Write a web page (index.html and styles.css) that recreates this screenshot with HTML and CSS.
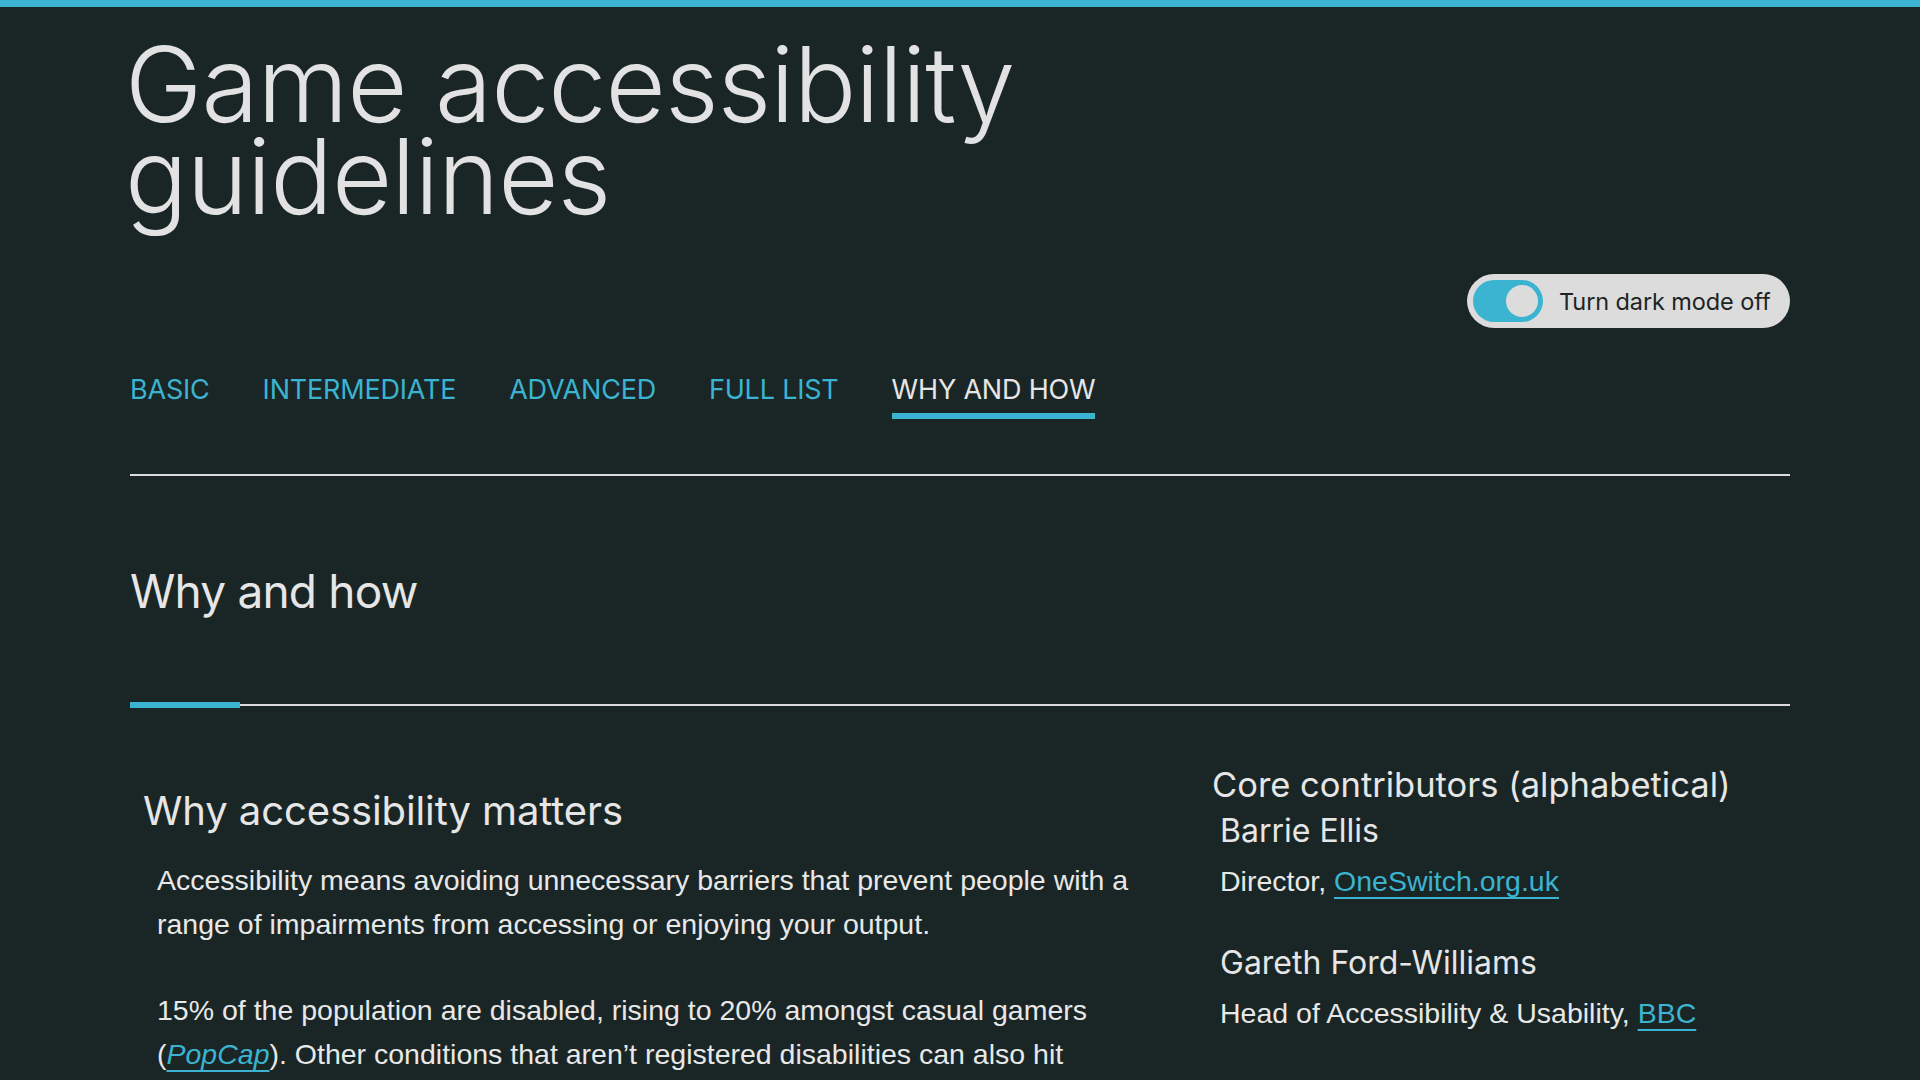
FILE: index.html
```html
<!DOCTYPE html>
<html lang="en">
<head>
<meta charset="utf-8">
<title>Game accessibility guidelines</title>
<link rel="stylesheet" href="styles.css">
</head>
<body>
<div class="topbar"></div>
<div class="wrap">
  <header class="masthead">
    <h1 class="site-title">Game accessibility<br>guidelines</h1>
    <div class="toggle-row">
      <button class="toggle" type="button">
        <span class="switch"><span class="knob"></span></span>
        <span class="toggle-label">Turn dark mode off</span>
      </button>
    </div>
    <nav class="tabs">
      <a class="tab" href="#">BASIC</a>
      <a class="tab" href="#">INTERMEDIATE</a>
      <a class="tab" href="#">ADVANCED</a>
      <a class="tab" href="#">FULL LIST</a>
      <a class="tab active" href="#">WHY AND HOW</a>
    </nav>
  </header>

  <section class="page-head">
    <h2 class="page-title">Why and how</h2>
  </section>

  <div class="columns">
    <div class="main-col">
      <h3 class="sub-title">Why accessibility matters</h3>
      <p class="body-text">Accessibility means avoiding unnecessary barriers that prevent people with a range of impairments from accessing or enjoying your output.</p>
      <p class="body-text">15% of the population are disabled, rising to 20% amongst casual gamers (<a class="link" href="#"><em>PopCap</em></a>). Other conditions that aren’t registered disabilities can also hit access, such as colour blindness, which affects 1 in 12 males.</p>
    </div>
    <aside class="side-col">
      <h3 class="side-title">Core contributors (alphabetical)</h3>
      <div class="person">
        <div class="person-name">Barrie Ellis</div>
        <div class="person-role">Director, <a class="link" href="#">OneSwitch.org.uk</a></div>
      </div>
      <div class="person">
        <div class="person-name">Gareth Ford-Williams</div>
        <div class="person-role">Head of Accessibility &amp; Usability, <a class="link" href="#">BBC</a></div>
      </div>
    </aside>
  </div>
</div>
</body>
</html>
```

FILE: styles.css
```css
html, body {
  margin: 0;
  padding: 0;
}
body {
  background: #1a2526;
  color: #e6e6e6;
  font-family: "Liberation Sans", Arial, sans-serif;
}
.topbar {
  height: 7px;
  background: #3ab4d0;
}
.wrap {
  padding: 0 130px;
}
.site-title {
  margin: 31px 0 0 -5px;
  font-family: Inter, "Noto Sans", sans-serif;
  font-weight: 300;
  font-size: 104px;
  line-height: 92px;
  letter-spacing: -0.95px;
  color: #e2e2e2;
}
.toggle-row {
  display: flex;
  justify-content: flex-end;
  margin-top: 52px;
}
.toggle {
  display: flex;
  align-items: center;
  gap: 16px;
  height: 54px;
  width: 323px;
  box-sizing: border-box;
  padding: 0 20px 0 6px;
  border: none;
  border-radius: 27px;
  background: #dcdcdc;
  cursor: pointer;
}
.switch {
  display: flex;
  align-items: center;
  justify-content: flex-end;
  flex: none;
  width: 70px;
  height: 42px;
  box-sizing: border-box;
  padding: 0 5px;
  border-radius: 21px;
  background: #3ab4d0;
}
.knob {
  width: 32px;
  height: 32px;
  border-radius: 50%;
  background: #dcdcdc;
}
.toggle-label {
  font-family: Inter, "Noto Sans", sans-serif;
  font-size: 23.5px;
  letter-spacing: -0.1px;
  color: #1e2424;
  white-space: nowrap;
}
.tabs {
  display: flex;
  gap: 53px;
  margin-top: 46px;
  padding-bottom: 55px;
  border-bottom: 2px solid #dcdcdc;
}
.tab {
  font-family: Inter, "Noto Sans", sans-serif;
  font-size: 27px;
  line-height: 32px;
  letter-spacing: -0.2px;
  color: #3ab4d0;
  text-decoration: none;
  padding-bottom: 7px;
  border-bottom: 6px solid transparent;
}
.tab.active {
  color: #e6e6e6;
  border-bottom-color: #3ab4d0;
}
.page-head {
  position: relative;
  margin-top: 85px;
  padding-bottom: 83px;
  border-bottom: 2px solid #dcdcdc;
}
.page-head::after {
  content: "";
  position: absolute;
  left: 0;
  bottom: -4px;
  width: 110px;
  height: 6px;
  background: #3ab4d0;
}
.page-title {
  margin: 0;
  font-family: Inter, "Noto Sans", sans-serif;
  font-weight: 400;
  font-size: 46px;
  line-height: 60px;
  letter-spacing: -0.8px;
  color: #e6e6e6;
}
.columns {
  display: grid;
  grid-template-columns: 1020px 578px;
  column-gap: 62px;
}
.main-col {
  padding: 81px 0 0 13px;
}
.side-col {
  padding-top: 58px;
}
.sub-title {
  margin: 0;
  font-family: Inter, "Noto Sans", sans-serif;
  font-weight: 400;
  font-size: 40px;
  line-height: 48px;
  letter-spacing: -0.1px;
  color: #e6e6e6;
}
.body-text {
  margin: 24px 0 0 14px;
  font-size: 28.5px;
  line-height: 43.5px;
  color: #e8e8e8;
}
.body-text + .body-text {
  margin-top: 43px;
}
.link {
  color: #3ab4d0;
  text-decoration: underline;
  text-decoration-thickness: 2px;
  text-underline-offset: 6px;
}
.side-title {
  margin: 0;
  font-family: Inter, "Noto Sans", sans-serif;
  font-weight: 400;
  font-size: 34.5px;
  line-height: 41px;
  color: #e6e6e6;
}
.person {
  padding-left: 8px;
  margin-top: 7px;
}
.person + .person {
  margin-top: 40px;
}
.person-name {
  font-family: Inter, "Noto Sans", sans-serif;
  font-size: 32px;
  line-height: 38px;
  color: #e6e6e6;
}
.person-role {
  margin-top: 10px;
  font-size: 28.5px;
  line-height: 43.5px;
  color: #e8e8e8;
}
```
